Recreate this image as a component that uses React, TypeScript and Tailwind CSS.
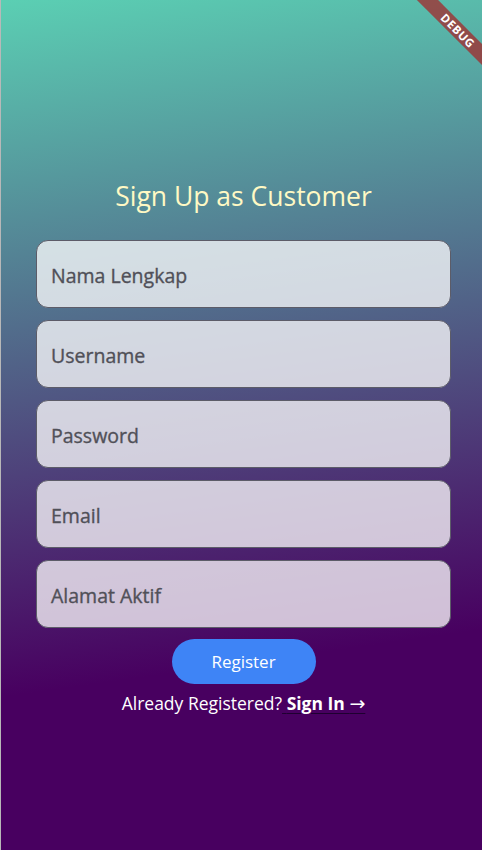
const fields = ["Nama Lengkap", "Username", "Password", "Email", "Alamat Aktif"];

export default function App() {
  return (
    <div className="relative h-[850px] w-full overflow-hidden border-l border-[#b8b8b8] bg-[linear-gradient(172deg,#5bcfb3_0%,#480060_76%)] font-['Open_Sans',sans-serif]">
      {/* debug ribbon */}
      <div className="absolute left-[402px] top-[23px] flex h-[15px] w-[110px] rotate-45 items-center justify-center bg-[#a81f22]/[0.7]">
        <span className="text-[11.5px] font-bold leading-none tracking-[0.6px] text-white">DEBUG</span>
      </div>

      <div className="flex flex-col pl-[35px] pr-[31px] pt-[178px]">
        <h1 className="text-center text-[26.5px] leading-[36px] text-[#fff9c4]">Sign Up as Customer</h1>

        <div className="mt-[26px] flex flex-col gap-[12px]">
          {fields.map((label) => (
            <div
              key={label}
              className="flex h-[68px] items-center rounded-[12px] border border-[#5c5c68] bg-white/75 pl-[14px] pt-[3px] text-[19.5px] text-[#505058] [-webkit-text-stroke:0.35px_#505058]"
            >
              {label}
            </div>
          ))}
        </div>

        <button className="mt-[11px] h-[45px] w-[144px] self-center rounded-full bg-[#3e84f6] text-[17px] text-white">
          Register
        </button>

        <p className="mt-[7px] text-center text-[17.5px] leading-[24px] text-white">
          Already Registered?
          <span className="font-bold underline decoration-[#1e0030] underline-offset-[3px]">
            {" "}Sign In <span className="font-['DejaVu_Sans',sans-serif] text-[19px] font-normal">→</span>
          </span>
        </p>
      </div>
    </div>
  );
}
